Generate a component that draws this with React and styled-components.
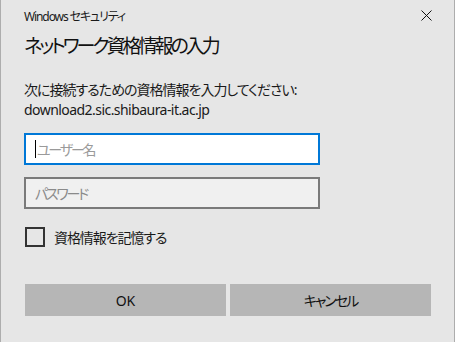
import React from 'react';
import styled, { createGlobalStyle } from 'styled-components';

const GlobalStyle = createGlobalStyle`
  html, body {
    margin: 0;
    padding: 0;
    background: #e6e6e6;
  }
  * {
    box-sizing: border-box;
  }
`;

const font = `"Segoe UI", "Noto Sans", "Noto Sans CJK JP", sans-serif`;

const Window = styled.div`
  width: 455px;
  height: 342px;
  background: #e6e6e6;
  border-left: 1px solid #adadad;
  border-right: 1px solid #adadad;
  padding: 0 24px 0 23px;
  font-family: ${font};
  font-feature-settings: "palt";
  color: #1a1a1a;
  overflow: hidden;
`;

const TitleBar = styled.div`
  display: flex;
  align-items: center;
  justify-content: space-between;
  height: 31px;
`;

const TitleText = styled.span`
  font-size: 12px;
  letter-spacing: -1.1px;
  color: #1a1a1a;
`;

const CloseButton = styled.button`
  display: flex;
  align-items: center;
  justify-content: center;
  width: 20px;
  height: 20px;
  margin-right: -6px;
  padding: 0;
  border: none;
  background: transparent;
`;

const Heading = styled.h1`
  margin: 1px 0 0;
  font-size: 19px;
  font-weight: 400;
  line-height: 28px;
  letter-spacing: -3px;
  color: #111;
`;

const Message = styled.div`
  margin-top: 20px;
  font-size: 14px;
  line-height: 20px;
  color: #1a1a1a;
`;

const Line = styled.div`
  letter-spacing: ${(p) => (p.$latin ? '-0.55px' : '-1px')};
`;

const Field = styled.div`
  display: flex;
  align-items: center;
  width: 296px;
  height: 32px;
  margin-top: ${(p) => p.$top}px;
  padding: 0 9px;
  border: 2px solid ${(p) => (p.$focused ? '#0078d7' : '#7a7a7a')};
  background: ${(p) => (p.$focused ? '#ffffff' : '#f0f0f0')};
  font-size: 14px;
  letter-spacing: -2.2px;
  color: ${(p) => (p.$focused ? '#9a9a9a' : '#8a8a8a')};
`;

const Caret = styled.span`
  display: inline-block;
  width: 1px;
  height: 18px;
  margin-right: 1px;
  background: #000;
`;

const CheckRow = styled.label`
  display: flex;
  align-items: center;
  gap: 9px;
  margin-top: 18px;
  font-size: 14px;
  letter-spacing: -1.1px;
  color: #1a1a1a;
`;

const Box = styled.span`
  width: 20px;
  height: 20px;
  margin-left: 1px;
  border: 2px solid #333;
`;

const Buttons = styled.div`
  display: grid;
  grid-template-columns: 201px 201px;
  gap: 4px;
  margin: 37px 0 0 1px;
`;

const Button = styled.button`
  height: 32px;
  border: none;
  background: #b6b6b6;
  font-family: ${font};
  font-feature-settings: "palt";
  font-size: 14px;
  letter-spacing: ${(p) => (p.$latin ? '0' : '-2px')};
  color: #111;
`;

export default function App() {
  return (
    <>
      <GlobalStyle />
      <Window>
        <TitleBar>
          <TitleText>Windows セキュリティ</TitleText>
          <CloseButton aria-label="閉じる">
            <svg width="11" height="11" viewBox="0 0 11 11">
              <path d="M0.5 0.5 L10.5 10.5 M10.5 0.5 L0.5 10.5" stroke="#111" strokeWidth="1" />
            </svg>
          </CloseButton>
        </TitleBar>
        <Heading>ネットワーク資格情報の入力</Heading>
        <Message>
          <Line>次に接続するための資格情報を入力してください:</Line>
          <Line $latin>download2.sic.shibaura-it.ac.jp</Line>
        </Message>
        <Field $focused $top={13}>
          <Caret />
          ユーザー名
        </Field>
        <Field $top={12}>パスワード</Field>
        <CheckRow>
          <Box />
          資格情報を記憶する
        </CheckRow>
        <Buttons>
          <Button $latin>OK</Button>
          <Button>キャンセル</Button>
        </Buttons>
      </Window>
    </>
  );
}
